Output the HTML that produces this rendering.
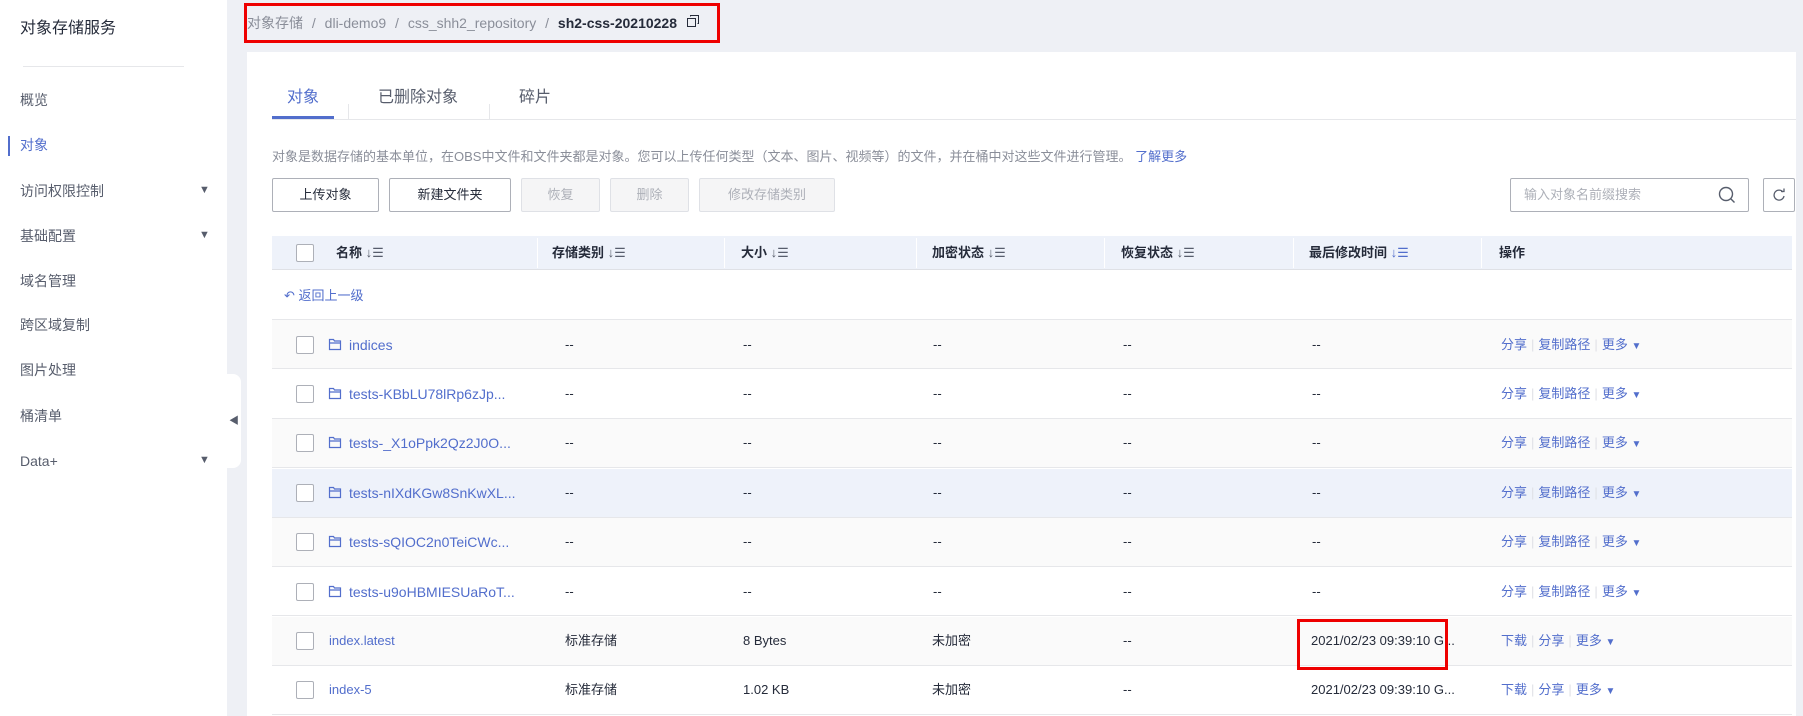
<!DOCTYPE html>
<html><head><meta charset="utf-8"><style>
*{margin:0;padding:0;box-sizing:border-box}
body{width:1803px;height:716px;overflow:hidden;background:#eef0f5;font-family:"Liberation Sans","Noto Sans CJK SC",sans-serif;color:#252b3a;position:relative;font-size:13px}
.a{position:absolute;white-space:nowrap;line-height:18px}
.side{position:absolute;left:0;top:0;width:227px;height:716px;background:#fff}
.nav{position:absolute;left:20px;font-size:14px;color:#575d6c}
.arr{position:absolute;left:199px;font-size:11px;color:#575d6c}
.panel{position:absolute;left:247px;top:52px;width:1549px;height:664px;background:#fff}
.btn{position:absolute;top:178px;height:34px;border:1px solid #adb0b8;border-radius:2px;font-size:13px;text-align:center;line-height:32px;background:#fff}
.dis{border-color:#dfe1e6;color:#adb0b8;background:#f5f5f6}
.cb{position:absolute;left:296px;width:18px;height:18px;border:1px solid #adb0b8;border-radius:2px;background:#fff}
.row{position:absolute;left:272px;width:1520px;height:49px;border-bottom:1px solid #e6e7ea}
.lk{color:#526ecc}
.sep{color:#dfe1e6;margin:0 4px}
.th{font-weight:bold;font-size:13px;color:#252b3a}
</style></head><body>
<div class="side">
<div class="a" style="left:20px;top:20px;font-size:16px;color:#252b3a">对象存储服务</div>
<div class="a" style="left:23px;top:66px;width:161px;height:1px;background:#e6e7ea"></div>
<div class="nav a" style="top:91px">概览</div>
<div class="a" style="left:8px;top:136px;width:2px;height:20px;background:#526ecc"></div>
<div class="nav a" style="top:136px;color:#526ecc">对象</div>
<div class="nav a" style="top:182px">访问权限控制</div><div class="arr" style="top:184px">▼</div>
<div class="nav a" style="top:227px">基础配置</div><div class="arr" style="top:229px">▼</div>
<div class="nav a" style="top:272px">域名管理</div>
<div class="nav a" style="top:316px">跨区域复制</div>
<div class="nav a" style="top:361px">图片处理</div>
<div class="nav a" style="top:407px">桶清单</div>
<div class="nav a" style="top:452px">Data+</div><div class="arr" style="top:454px">▼</div>
</div>
<div class="a" style="left:227px;top:374px;width:14px;height:94px;background:#fff;border-radius:0 8px 8px 0"></div>
<div class="a" style="left:229px;top:413px;font-size:10px;color:#575d6c">◀</div>

<div class="a" style="left:247px;top:14px;font-size:14px;color:#8a8e99">对象存储 <span style="margin:0 5px">/</span> dli-demo9 <span style="margin:0 5px">/</span> css_shh2_repository <span style="margin:0 5px">/</span> <b style="color:#252b3a">sh2-css-20210228</b></div>
<svg class="a" style="left:686px;top:14px" width="14" height="14" viewBox="0 0 14 14"><rect x="1.5" y="4.5" width="8" height="8" fill="none" stroke="#252b3a"/><path d="M4.5 2.5V1.5h8v8h-1" fill="none" stroke="#252b3a"/></svg>
<div class="a" style="left:244px;top:3px;width:476px;height:40px;border:3px solid #e00"></div>

<div class="panel"></div>
<div class="a" style="left:287px;top:89px;font-size:16px;color:#526ecc">对象</div>
<div class="a" style="left:272px;top:116px;width:62px;height:3px;background:#526ecc"></div>
<div class="a" style="left:348px;top:104px;width:1px;height:16px;background:#e6e7ea"></div>
<div class="a" style="left:378px;top:89px;font-size:16px;color:#575d6c">已删除对象</div>
<div class="a" style="left:489px;top:104px;width:1px;height:16px;background:#e6e7ea"></div>
<div class="a" style="left:519px;top:89px;font-size:16px;color:#575d6c">碎片</div>
<div class="a" style="left:272px;top:119px;width:1524px;height:1px;background:#e6e7ea"></div>
<div class="a" style="left:272px;top:148px;font-size:13px;color:#8a8e99">对象是数据存储的基本单位，在OBS中文件和文件夹都是对象。您可以上传任何类型（文本、图片、视频等）的文件，并在桶中对这些文件进行管理。 <span class="lk">了解更多</span></div>
<div class="btn" style="left:272px;width:107px">上传对象</div>
<div class="btn" style="left:389px;width:122px">新建文件夹</div>
<div class="btn dis" style="left:521px;width:79px">恢复</div>
<div class="btn dis" style="left:610px;width:79px">删除</div>
<div class="btn dis" style="left:699px;width:136px">修改存储类别</div>
<div class="a" style="left:1510px;top:178px;width:239px;height:34px;border:1px solid #adb0b8;border-radius:2px"></div>
<div class="a" style="left:1524px;top:186px;color:#adb0b8">输入对象名前缀搜索</div>
<svg class="a" style="left:1718px;top:186px" width="18" height="18" viewBox="0 0 18 18"><circle cx="8" cy="8" r="6.5" fill="none" stroke="#575d6c" stroke-width="1.4"/><path d="M12.5 12.5l4 4" stroke="#575d6c" stroke-width="1.4"/></svg>
<div class="a" style="left:1763px;top:178px;width:32px;height:34px;border:1px solid #adb0b8;border-radius:2px"></div>
<svg class="a" style="left:1772px;top:188px" width="14" height="14" viewBox="0 0 14 14"><path d="M11 4A5 5 0 1 0 12 8" fill="none" stroke="#575d6c" stroke-width="1.3"/><path d="M9 3.5h3v-3" fill="none" stroke="#575d6c" stroke-width="1.3"/></svg>

<div class="a" style="left:272px;top:236px;width:1520px;height:34px;background:#eef2fa;border-bottom:1px solid #dfe1e6"></div>
<div class="a" style="left:537px;top:238px;width:1px;height:30px;background:#fff"></div>
<div class="a" style="left:724px;top:238px;width:1px;height:30px;background:#fff"></div>
<div class="a" style="left:916px;top:238px;width:1px;height:30px;background:#fff"></div>
<div class="a" style="left:1104px;top:238px;width:1px;height:30px;background:#fff"></div>
<div class="a" style="left:1293px;top:238px;width:1px;height:30px;background:#fff"></div>
<div class="a" style="left:1481px;top:238px;width:1px;height:30px;background:#fff"></div>
<div class="cb" style="top:244px"></div>
<div class="a th" style="left:336px;top:244px">名称 <span style="font-weight:normal;color:#575d6c">↓☰</span></div>
<div class="a th" style="left:552px;top:244px">存储类别 <span style="font-weight:normal;color:#575d6c">↓☰</span></div>
<div class="a th" style="left:741px;top:244px">大小 <span style="font-weight:normal;color:#575d6c">↓☰</span></div>
<div class="a th" style="left:932px;top:244px">加密状态 <span style="font-weight:normal;color:#575d6c">↓☰</span></div>
<div class="a th" style="left:1121px;top:244px">恢复状态 <span style="font-weight:normal;color:#575d6c">↓☰</span></div>
<div class="a th" style="left:1309px;top:244px">最后修改时间 <span style="font-weight:normal;color:#526ecc">↓☰</span></div>
<div class="a th" style="left:1499px;top:244px">操作</div>
<div class="a lk" style="left:284px;top:287px">↶ 返回上一级</div>
<div class="a" style="left:272px;top:319px;width:1520px;height:1px;background:#e6e7ea"></div>

<div class="row" style="top:320px;background:#fafafa"></div>
<div class="row" style="top:370px;background:#fff"></div>
<div class="row" style="top:419px;background:#fafafa"></div>
<div class="row" style="top:469px;background:#eef2fa"></div>
<div class="row" style="top:518px;background:#fafafa"></div>
<div class="row" style="top:567px;background:#fff"></div>
<div class="row" style="top:617px;background:#fafafa"></div>
<div class="row" style="top:666px;background:#fff"></div>

<div id="rows"></div>
<script>
var names=["indices","tests-KBbLU78lRp6zJp...","tests-_X1oPpk2Qz2J0O...","tests-nIXdKGw8SnKwXL...","tests-sQIOC2n0TeiCWc...","tests-u9oHBMIESUaRoT..."];
var h="";
for(var i=0;i<8;i++){
 var c=320+i*49.4+24.5;var t=Math.round(c-9);
 h+='<div class="cb" style="top:'+Math.round(c-9)+'px"></div>';
 if(i<6){
  h+='<svg class="a" style="left:328px;top:'+Math.round(c-8)+'px" width="14" height="14" viewBox="0 0 14 14"><path d="M1.5 12.5V2.5h4l1 1.5h6v8.5z M1.5 6h11" fill="none" stroke="#526ecc" stroke-width="1.2"/></svg>';
  h+='<div class="a lk" style="left:349px;top:'+t+'px;font-size:14px">'+names[i]+'</div>';
  [565,743,933,1123,1312].forEach(function(x){h+='<div class="a" style="left:'+x+'px;top:'+t+'px">--</div>'});
  h+='<div class="a lk" style="left:1501px;top:'+t+'px">分享<span class="sep">|</span>复制路径<span class="sep">|</span>更多 <span style="font-size:10px">▼</span></div>';
 }else{
  h+='<div class="a lk" style="left:329px;top:'+t+'px">'+(i==6?"index.latest":"index-5")+'</div>';
  h+='<div class="a" style="left:565px;top:'+t+'px">标准存储</div>';
  h+='<div class="a" style="left:743px;top:'+t+'px">'+(i==6?"8 Bytes":"1.02 KB")+'</div>';
  h+='<div class="a" style="left:932px;top:'+t+'px">未加密</div>';
  h+='<div class="a" style="left:1123px;top:'+t+'px">--</div>';
  h+='<div class="a" style="left:1311px;top:'+t+'px">2021/02/23 09:39:10 G...</div>';
  h+='<div class="a lk" style="left:1501px;top:'+t+'px">下载<span class="sep">|</span>分享<span class="sep">|</span>更多 <span style="font-size:10px">▼</span></div>';
 }
}
document.getElementById("rows").innerHTML=h;
</script>
<div class="a" style="left:1297px;top:619px;width:151px;height:51px;border:3px solid #e00"></div>
</body></html>
